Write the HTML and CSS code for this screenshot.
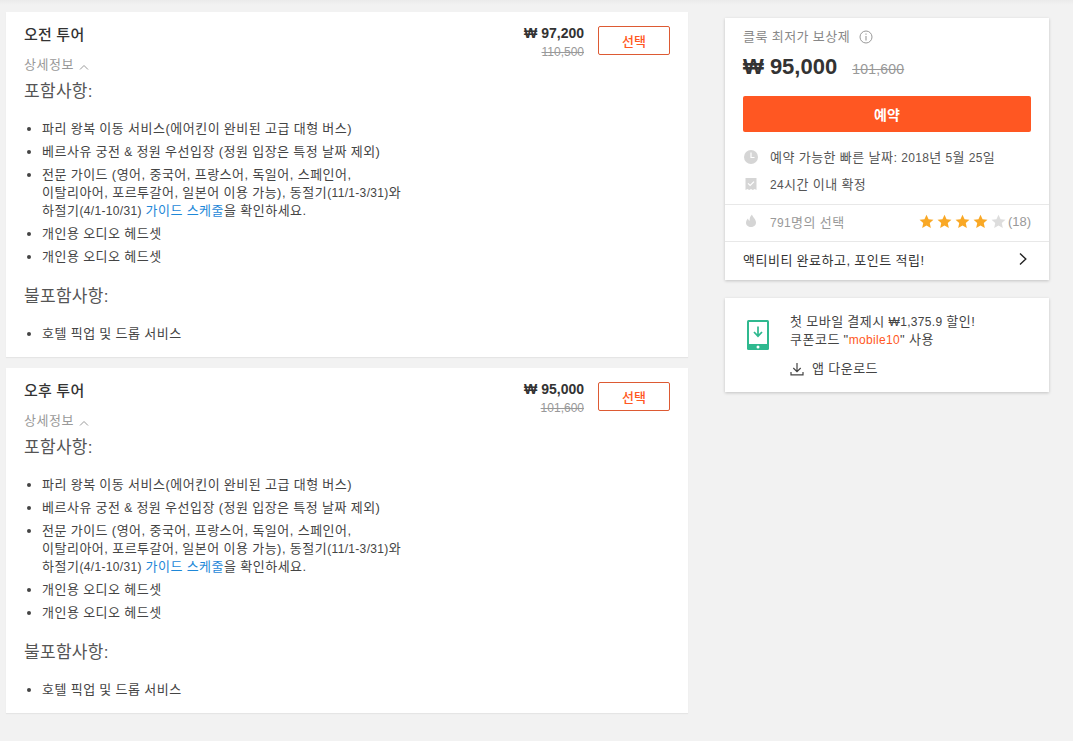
FILE: index.html
```html
<!DOCTYPE html>
<html lang="ko">
<head>
<meta charset="utf-8">
<title>투어</title>
<link rel="stylesheet" href="styles.css">
</head>
<body>
<div class="page">
  <main class="left">
    <section class="card tour">
      <div class="tour-head">
        <div class="tour-title">오전 투어</div>
        <div class="prices"><div class="now">₩ 97,200</div><div class="was">110,500</div></div>
        <button class="select">선택</button>
      </div>
      <div class="detail">상세정보 <svg class="chev" width="10" height="6" viewBox="0 0 10 6"><path d="M1 5.500 5 1.500 9 5.500" fill="none" stroke="#999" stroke-width="1"/></svg></div>
      <h4 class="sec">포함사항:</h4>
      <ul class="list">
        <li>파리 왕복 이동 서비스(에어킨이 완비된 고급 대형 버스)</li>
        <li>베르사유 궁전 <span class="n">&amp;</span> 정원 우선입장 (정원 입장은 특정 날짜 제외)</li>
        <li>전문 가이드 (영어, 중국어, 프랑스어, 독일어, 스페인어,<br>이탈리아어, 포르투갈어, 일본어 이용 가능), 동절기<span class="n">(11/1-3/31)</span>와<br>하절기<span class="n">(4/1-10/31)</span> <a href="#">가이드 스케줄</a>을 확인하세요.</li>
        <li>개인용 오디오 헤드셋</li>
        <li>개인용 오디오 헤드셋</li>
      </ul>
      <h4 class="sec sec2">불포함사항:</h4>
      <ul class="list">
        <li>호텔 픽업 및 드롭 서비스</li>
      </ul>
    </section>
    <section class="card tour">
      <div class="tour-head">
        <div class="tour-title">오후 투어</div>
        <div class="prices"><div class="now">₩ 95,000</div><div class="was">101,600</div></div>
        <button class="select">선택</button>
      </div>
      <div class="detail">상세정보 <svg class="chev" width="10" height="6" viewBox="0 0 10 6"><path d="M1 5.500 5 1.500 9 5.500" fill="none" stroke="#999" stroke-width="1"/></svg></div>
      <h4 class="sec">포함사항:</h4>
      <ul class="list">
        <li>파리 왕복 이동 서비스(에어킨이 완비된 고급 대형 버스)</li>
        <li>베르사유 궁전 <span class="n">&amp;</span> 정원 우선입장 (정원 입장은 특정 날짜 제외)</li>
        <li>전문 가이드 (영어, 중국어, 프랑스어, 독일어, 스페인어,<br>이탈리아어, 포르투갈어, 일본어 이용 가능), 동절기<span class="n">(11/1-3/31)</span>와<br>하절기<span class="n">(4/1-10/31)</span> <a href="#">가이드 스케줄</a>을 확인하세요.</li>
        <li>개인용 오디오 헤드셋</li>
        <li>개인용 오디오 헤드셋</li>
      </ul>
      <h4 class="sec sec2">불포함사항:</h4>
      <ul class="list">
        <li>호텔 픽업 및 드롭 서비스</li>
      </ul>
    </section>
  </main>
  <aside class="right">
    <section class="card book">
      <div class="book-top">
        <div class="guarantee">클룩 최저가 보상제
          <svg class="info" width="14" height="14" viewBox="0 0 14 14"><circle cx="7" cy="7" r="6" fill="none" stroke="#999" stroke-width="1"/><path d="M7 6v4.500M7 3.400v1.400" stroke="#999" stroke-width="1.100" fill="none"/></svg>
        </div>
        <div class="price-row"><span class="big">₩ 95,000</span><span class="big-was">101,600</span></div>
        <button class="reserve">예약</button>
        <div class="fact"><svg class="fact-icon clock" width="16" height="16" viewBox="0 0 16 16"><circle cx="8" cy="8" r="7" fill="#d5d5d5"/><path d="M8 3.500V8.500h3.500" fill="none" stroke="#fff" stroke-width="1.200"/></svg><div>예약 가능한 빠른 날짜: <span class="n">2018</span>년 <span class="n">5</span>월 <span class="n">25</span>일</div></div>
        <div class="fact"><svg class="fact-icon check" width="16" height="16" viewBox="0 0 16 16"><path d="M2.500 2h11v12l-1.800-1-1.900 1-1.800-1-1.800 1-1.800-1-1.900 1z" fill="#d5d5d5"/><path d="M5 7.300l2.200 2.200 3.800-3.800" fill="none" stroke="#fff" stroke-width="1.200"/></svg><div><span class="n">24</span>시간 이내 확정</div></div>
      </div>
      <div class="stats">
        <svg class="fact-icon" width="16" height="16" viewBox="0 0 16 16"><path d="M9 1.500c.5 2.500 4 4.500 4 8C13 12.300 10.800 14 8 14S3 12.300 3 9.800c0-2 1-3.300 2-4.300.2 1.300.8 2 1.600 2.300C6.500 5 7.500 2.800 9 1.500z" fill="#d5d5d5"/></svg>
        <div class="chosen"><span class="n">791</span>명의 선택</div>
        <div class="stars">
          <svg width="15" height="15" viewBox="0 0 16 16"><path class="star-on" d="M8 .8l2.200 4.800 5.200.6-3.900 3.500 1.100 5.100L8 12.200l-4.600 2.600 1.100-5.100L.6 6.200l5.200-.6z"/></svg>
          <svg width="15" height="15" viewBox="0 0 16 16"><path class="star-on" d="M8 .8l2.200 4.800 5.200.6-3.900 3.500 1.100 5.100L8 12.200l-4.600 2.600 1.100-5.100L.6 6.200l5.200-.6z"/></svg>
          <svg width="15" height="15" viewBox="0 0 16 16"><path class="star-on" d="M8 .8l2.200 4.800 5.200.6-3.900 3.500 1.100 5.100L8 12.200l-4.600 2.600 1.100-5.100L.6 6.200l5.200-.6z"/></svg>
          <svg width="15" height="15" viewBox="0 0 16 16"><path class="star-on" d="M8 .8l2.200 4.800 5.200.6-3.900 3.500 1.100 5.100L8 12.200l-4.600 2.600 1.100-5.100L.6 6.200l5.200-.6z"/></svg>
          <svg width="15" height="15" viewBox="0 0 16 16"><path class="star-off" d="M8 .8l2.200 4.800 5.200.6-3.900 3.500 1.100 5.100L8 12.200l-4.600 2.600 1.100-5.100L.6 6.200l5.200-.6z"/></svg>
        </div>
        <div class="count">(18)</div>
      </div>
      <div class="points">
        <div>액티비티 완료하고, 포인트 적립!</div>
        <svg width="10" height="14" viewBox="0 0 10 14"><path d="M2 1.500 7.800 7 2 12.500" fill="none" stroke="#222" stroke-width="1.400"/></svg>
      </div>
    </section>
    <section class="card promo">
      <svg class="phone" width="22" height="30" viewBox="0 0 22 30"><rect x="0" y="0" width="22" height="30" rx="1.500" fill="#2fb98f"/><rect x="2" y="2" width="18" height="22" fill="#fff"/><circle cx="11" cy="27" r="1.500" fill="#fff"/><path d="M11 6.500v9.500M7 12l4 4.200L15 12" fill="none" stroke="#2fb98f" stroke-width="1.700"/></svg>
      <div class="promo-body">
        <div class="promo-text">첫 모바일 결제시 <span class="n">₩1,375.9</span> 할인!<br>쿠폰코드 "<span class="n code">mobile10</span>" 사용</div>
        <div class="app"><svg width="14" height="14" viewBox="0 0 14 14"><path d="M7 1v8.500M3.300 6 7 9.700 10.700 6M1 10v2.800h12V10" fill="none" stroke="#444" stroke-width="1.200"/></svg><div>앱 다운로드</div></div>
      </div>
    </section>
  </aside>
</div>
</body>
</html>
```
FILE: styles.css
```css
* { box-sizing: border-box; }
html, body { margin: 0; padding: 0; }
body {
  background: #f2f2f2 linear-gradient(#ebebeb, #f2f2f2 5px) no-repeat;
  font-family: "Liberation Sans", "Noto Sans CJK KR", sans-serif;
  color: #333;
  font-size: 13px;
  letter-spacing: .5px;
  word-spacing: -.35px;
  height: 741px;
  overflow: hidden;
}
.n { font-size: 12px; letter-spacing: .33px; word-spacing: 0; }
.page {
  display: flex;
  align-items: flex-start;
  padding: 12px 24px 0 6px;
  gap: 37px;
}
.left { width: 682px; display: flex; flex-direction: column; gap: 11px; }
.right { width: 324px; display: flex; flex-direction: column; gap: 18px; margin-top: 6px; }
.card { background: #fff; }
.tour { padding: 14px 18px 0; height: 345px; box-shadow: 0 1px 1px rgba(0,0,0,.05); }
.tour-head { display: flex; align-items: flex-start; height: 29px; }
.tour-title { flex: 1; font-size: 15px; line-height: 18px; letter-spacing: .3px; font-weight: 500; color: #333; }
.prices { text-align: right; margin-right: 14px; letter-spacing: 0; word-spacing: 0; }
.now { font-size: 14px; line-height: 15px; font-weight: 700; color: #333; }
.was { font-size: 12px; line-height: 15px; margin-top: 4px; color: #999; text-decoration: line-through; }
.select {
  width: 72px; height: 29px; padding: 0;
  border: 1px solid #dd5a33; border-radius: 2px; background: #fff;
  color: #ff5722; font: 500 13px "Liberation Sans", "Noto Sans CJK KR", sans-serif;
}
.detail { color: #999; line-height: 18px; margin-top: 1px; height: 25px; }
.chev { margin-left: 1px; vertical-align: -1px; }
.sec { margin: 0; font-size: 17px; font-weight: 400; line-height: 22px; letter-spacing: .3px; color: #555; }
.sec2 { margin-top: 20px; }
.list { margin: 17px 0 0; padding: 0 0 0 18px; list-style: disc; }
.list li { line-height: 18px; margin-bottom: 5px; color: #444; }
.list a { color: #1e88d8; text-decoration: none; }
.book { box-shadow: 0 1px 3px rgba(0,0,0,.2); }
.book-top { padding: 10px 18px 0; height: 186px; }
.guarantee { color: #888; line-height: 18px; }
.info { vertical-align: -3px; margin-left: 5px; }
.price-row { display: flex; align-items: baseline; margin-top: 7px; height: 28px; letter-spacing: 0; word-spacing: 0; }
.big { font-size: 22px; font-weight: 700; color: #333; line-height: 28px; }
.big-was { margin-left: 15px; font-size: 14px; letter-spacing: .2px; color: #999; text-decoration: line-through; }
.reserve {
  display: block; width: 288px; height: 36px; margin-top: 15px; padding: 0;
  border: 0; border-radius: 2px; background: #ff5722; color: #fff;
  font: 700 14px "Liberation Sans", "Noto Sans CJK KR", sans-serif;
}
.fact { display: flex; align-items: center; height: 18px; color: #555; line-height: 18px; }
.reserve + .fact { margin-top: 17px; }
.fact + .fact { margin-top: 9px; }
.fact-icon { flex: none; margin-right: 11px; }
.clock { margin-top: -3px; }
.check { margin-top: -3px; }
.stats { display: flex; align-items: center; height: 37px; padding: 0 18px 4px; border-top: 1px solid #e8e8e8; color: #999; }
.chosen { flex: 1; }
.stars { display: flex; gap: 3px; }
.star-on { fill: #f9a825; }
.star-off { fill: #ddd; }
.count { margin-left: 2px; letter-spacing: 0; }
.points { display: flex; align-items: center; justify-content: space-between; height: 39px; padding: 0 21px 4px 18px; border-top: 1px solid #e8e8e8; color: #333; }
.promo { display: flex; height: 94px; padding: 15px 18px; box-shadow: 0 1px 3px rgba(0,0,0,.2); }
.phone { flex: none; margin: 7px 21px 0 4px; }
.promo-body { flex: 1; }
.promo-text { line-height: 18px; color: #444; }
.code { color: #ff5722; }
.app { display: flex; align-items: center; gap: 8px; margin-top: 11px; line-height: 18px; color: #444; }
```
